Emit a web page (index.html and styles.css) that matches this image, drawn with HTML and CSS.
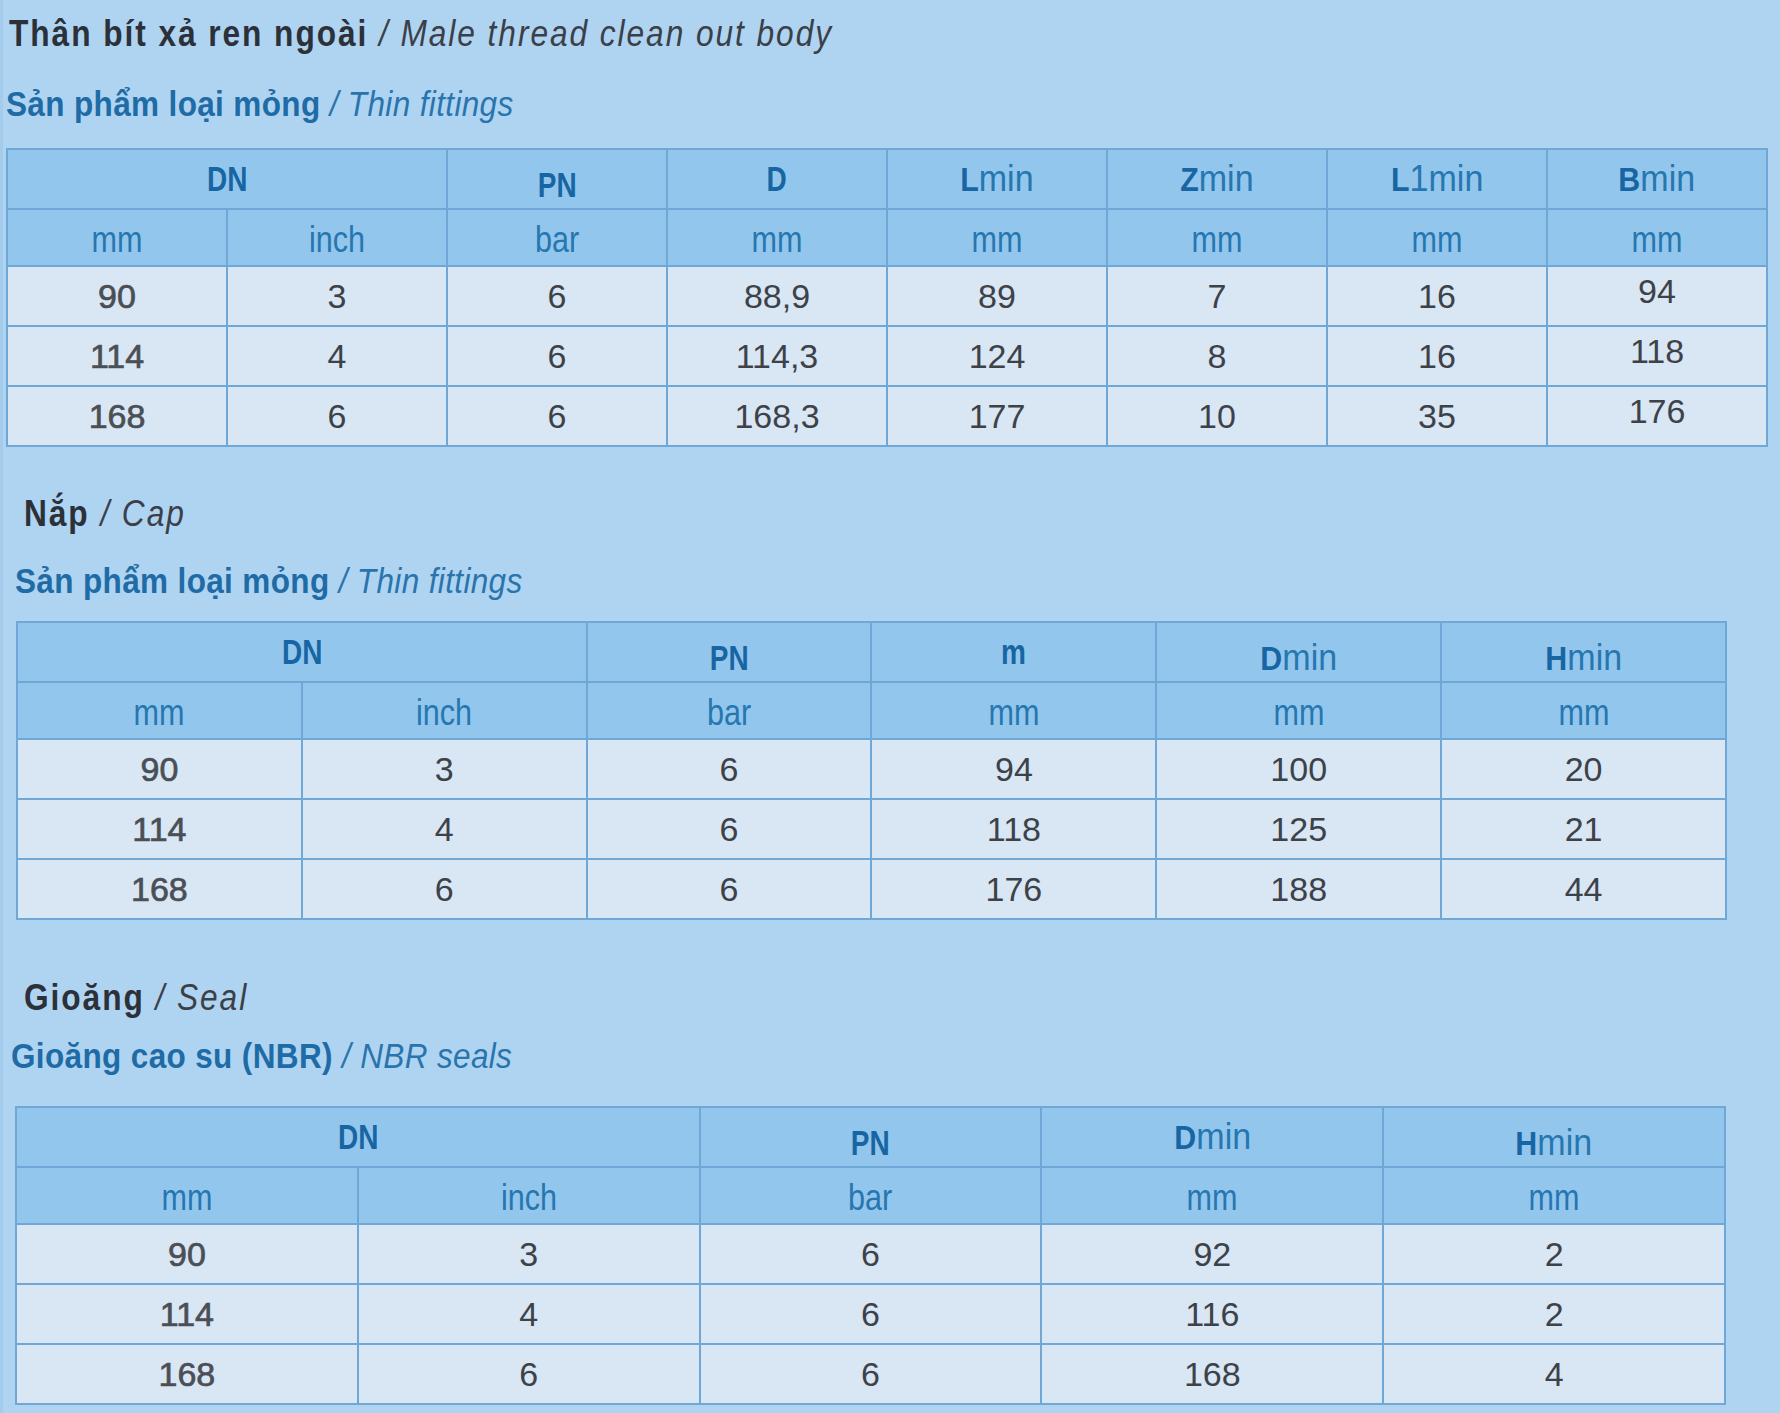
FILE: index.html
```html
<!DOCTYPE html>
<html lang="vi">
<head>
<meta charset="utf-8">
<title>Thân bít xả ren ngoài</title>
<link rel="stylesheet" href="styles.css">
</head>
<body>
<main class="page">
  <section class="sec sec-1">
    <h2 class="title"><span class="cx">Thân bít xả ren ngoài <span class="en">/ Male thread clean out body</span></span></h2>
    <h3 class="subtitle"><span class="cx">Sản phẩm loại mỏng <span class="en">/ Thin fittings</span></span></h3>
    <table class="spec spec-8">
      <colgroup><col><col><col><col><col><col><col><col></colgroup>
      <thead>
        <tr class="h1">
          <th colspan="2"><span class="cx">DN</span></th>
          <th class="lo"><span class="cx">PN</span></th>
          <th><span class="cx">D</span></th>
          <th><span class="cx cx-min"><b>L</b><span class="min">min</span></span></th>
          <th><span class="cx cx-min"><b>Z</b><span class="min">min</span></span></th>
          <th><span class="cx cx-min"><b>L</b><span class="min">1min</span></span></th>
          <th><span class="cx cx-min"><b>B</b><span class="min">min</span></span></th>
        </tr>
        <tr class="h2">
          <th><span class="cx">mm</span></th><th><span class="cx">inch</span></th><th><span class="cx">bar</span></th>
          <th><span class="cx">mm</span></th><th><span class="cx">mm</span></th><th><span class="cx">mm</span></th>
          <th><span class="cx">mm</span></th><th><span class="cx">mm</span></th>
        </tr>
      </thead>
      <tbody>
        <tr><td class="first">90</td><td>3</td><td>6</td><td>88,9</td><td>89</td><td>7</td><td>16</td><td class="hi">94</td></tr>
        <tr><td class="first">114</td><td>4</td><td>6</td><td>114,3</td><td>124</td><td>8</td><td>16</td><td class="hi">118</td></tr>
        <tr><td class="first">168</td><td>6</td><td>6</td><td>168,3</td><td>177</td><td>10</td><td>35</td><td class="hi">176</td></tr>
      </tbody>
    </table>
  </section>

  <section class="sec sec-2">
    <h2 class="title"><span class="cx">Nắp <span class="en">/ Cap</span></span></h2>
    <h3 class="subtitle"><span class="cx">Sản phẩm loại mỏng <span class="en">/ Thin fittings</span></span></h3>
    <table class="spec spec-6">
      <colgroup><col><col><col><col><col><col></colgroup>
      <thead>
        <tr class="h1">
          <th colspan="2"><span class="cx">DN</span></th>
          <th class="lo"><span class="cx">PN</span></th>
          <th><span class="cx">m</span></th>
          <th class="lo"><span class="cx cx-min"><b>D</b><span class="min">min</span></span></th>
          <th class="lo"><span class="cx cx-min"><b>H</b><span class="min">min</span></span></th>
        </tr>
        <tr class="h2">
          <th><span class="cx">mm</span></th><th><span class="cx">inch</span></th><th><span class="cx">bar</span></th>
          <th><span class="cx">mm</span></th><th><span class="cx">mm</span></th><th><span class="cx">mm</span></th>
        </tr>
      </thead>
      <tbody>
        <tr><td class="first">90</td><td>3</td><td>6</td><td>94</td><td>100</td><td>20</td></tr>
        <tr><td class="first">114</td><td>4</td><td>6</td><td>118</td><td>125</td><td>21</td></tr>
        <tr><td class="first">168</td><td>6</td><td>6</td><td>176</td><td>188</td><td>44</td></tr>
      </tbody>
    </table>
  </section>

  <section class="sec sec-3">
    <h2 class="title"><span class="cx">Gioăng <span class="en">/ Seal</span></span></h2>
    <h3 class="subtitle"><span class="cx">Gioăng cao su (NBR) <span class="en">/ NBR seals</span></span></h3>
    <table class="spec spec-5">
      <colgroup><col><col><col><col><col></colgroup>
      <thead>
        <tr class="h1">
          <th colspan="2"><span class="cx">DN</span></th>
          <th class="lo"><span class="cx">PN</span></th>
          <th><span class="cx cx-min"><b>D</b><span class="min">min</span></span></th>
          <th class="lo"><span class="cx cx-min"><b>H</b><span class="min">min</span></span></th>
        </tr>
        <tr class="h2">
          <th><span class="cx">mm</span></th><th><span class="cx">inch</span></th><th><span class="cx">bar</span></th>
          <th><span class="cx">mm</span></th><th><span class="cx">mm</span></th>
        </tr>
      </thead>
      <tbody>
        <tr><td class="first">90</td><td>3</td><td>6</td><td>92</td><td>2</td></tr>
        <tr><td class="first">114</td><td>4</td><td>6</td><td>116</td><td>2</td></tr>
        <tr><td class="first">168</td><td>6</td><td>6</td><td>168</td><td>4</td></tr>
      </tbody>
    </table>
  </section>
</main>
</body>
</html>
```

FILE: styles.css
```css
html, body {
  margin: 0;
  padding: 0;
}
body {
  background: #afd4f1;
  width: 1780px;
  min-height: 1413px;
  border-left: 3px solid #a2cbec;
  box-sizing: border-box;
  font-family: "Liberation Sans", Arial, sans-serif;
}
.page {
  display: flex;
  flex-direction: column;
}
.sec {
  display: flex;
  flex-direction: column;
}

/* condensed look: Liberation Sans squeezed horizontally */
.cx {
  display: inline-block;
  white-space: nowrap;
}

.title {
  margin: 0;
  font-weight: 700;
  font-size: 36px;
  line-height: 44px;
  color: #2c3139;
}
.title .cx {
  letter-spacing: 2.2px;
  transform: scaleX(0.88);
  transform-origin: 0 50%;
}
.title .en,
.subtitle .en {
  font-weight: 400;
  font-style: italic;
}
.title .en { color: #3b4048; }

.subtitle {
  margin: 0;
  font-weight: 700;
  font-size: 35px;
  line-height: 42px;
  color: #1f6ba6;
}
.subtitle .cx {
  letter-spacing: 0.4px;
  transform: scaleX(0.9);
  transform-origin: 0 50%;
}
.subtitle .en { color: #2a74ad; }

.sec-1 { padding-top: 12px; }
.sec-1 .title { padding-left: 6px; }
.sec-1 .subtitle { padding-left: 3px; margin-top: 27px; }
.sec-1 .spec { margin-left: 3px; margin-top: 23px; width: 1762px; }

.sec-2 { padding-top: 45px; }
.sec-2 .title { padding-left: 21px; }
.sec-2 .subtitle { padding-left: 12px; margin-top: 24px; }
.sec-2 .spec { margin-left: 13px; margin-top: 19px; width: 1711px; }

.sec-3 { padding-top: 56px; }
.sec-3 .title { padding-left: 21px; }
.sec-3 .subtitle { padding-left: 8px; margin-top: 15px; }
.sec-3 .spec { margin-left: 12px; margin-top: 29px; width: 1711px; }

.spec {
  border-collapse: collapse;
  table-layout: fixed;
  border: 2px solid #75acd9;
}
.spec th,
.spec td {
  border: 2px solid #6fa7d6;
  padding: 0;
  text-align: center;
  vertical-align: middle;
}
.spec th {
  background: #93c6ec;
  color: #1766a3;
}
.spec th .cx {
  transform: scaleX(0.85);
}
.spec .h1 { height: 60px; }
.spec .h1 th {
  font-weight: 700;
  font-size: 35px;
}
.spec .h1 th .cx {
  transform: scaleX(0.8);
}
.spec .h1 th .cx-min {
  transform: scaleX(0.92);
}
.spec .h1 th .cx-min b {
  font-size: 33px;
}
.spec .h1 th .min {
  font-weight: 400;
  font-size: 37px;
  color: #2676b0;
}
.spec .h1 th.lo {
  padding-top: 11px;
}
.spec .h2 { height: 57px; }
.spec .h2 th {
  font-weight: 400;
  font-size: 36px;
  color: #2676b0;
  padding-top: 4px;
}
.spec tbody tr { height: 60px; }
.spec td {
  background: #d9e6f4;
  color: #3d4249;
  font-size: 34px;
}
.spec td.hi {
  padding-bottom: 9px;
}
.spec td.first {
  -webkit-text-stroke: 0.7px #4a4f56;
  color: #4a4f56;
}
```
